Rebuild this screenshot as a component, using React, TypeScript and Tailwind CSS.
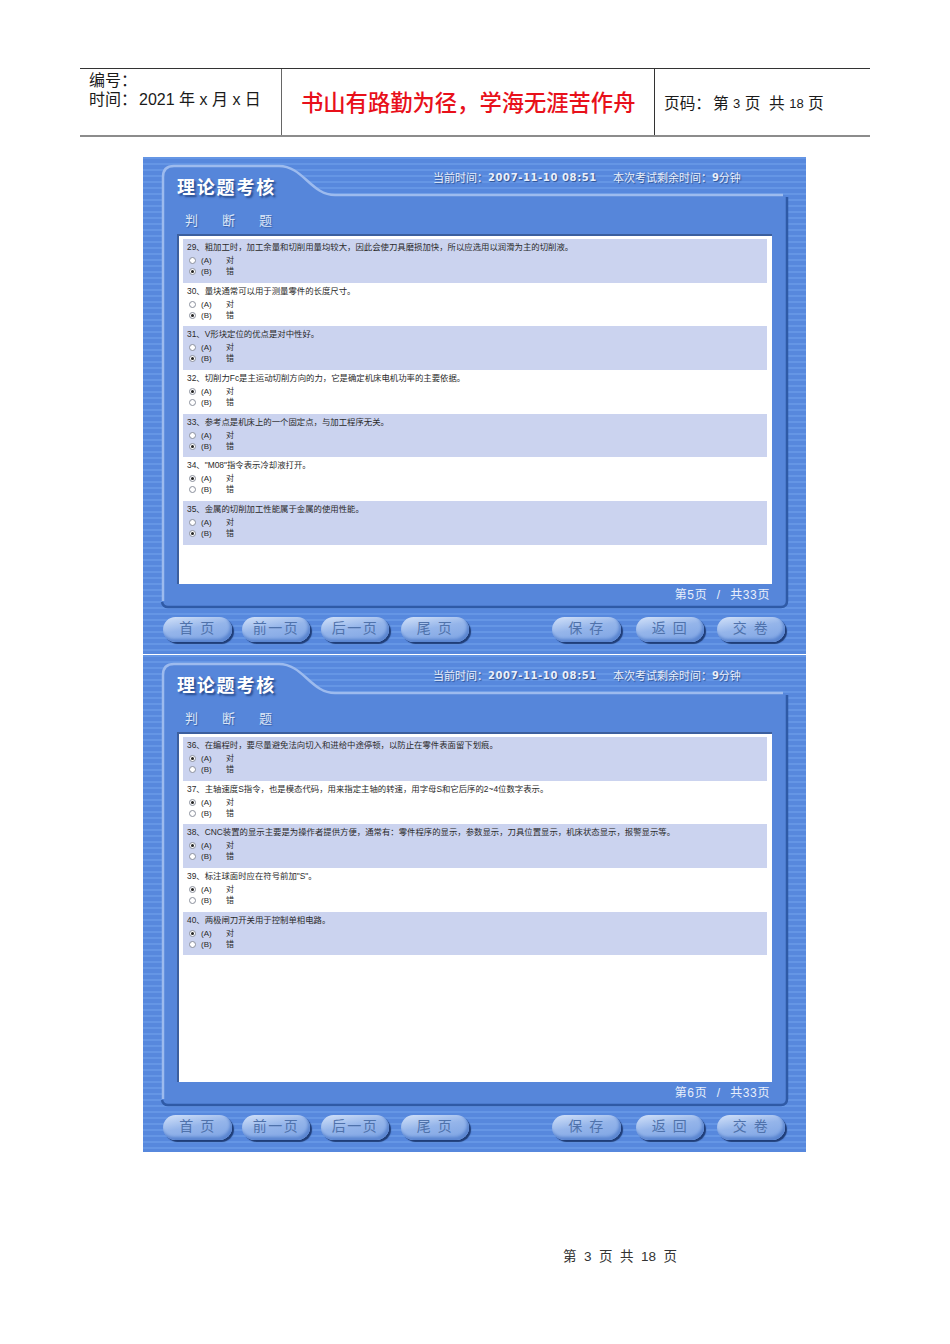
const cjk = "font-['Liberation_Sans','Noto_Sans_CJK_SC',sans-serif]";

type Question = { text: string; answer: "A" | "B" };

const pageOne: Question[] = [
  { text: "29、粗加工时，加工余量和切削用量均较大，因此会使刀具磨损加快，所以应选用以润滑为主的切削液。", answer: "B" },
  { text: "30、量块通常可以用于测量零件的长度尺寸。", answer: "B" },
  { text: "31、V形块定位的优点是对中性好。", answer: "B" },
  { text: "32、切削力Fc是主运动切削方向的力，它是确定机床电机功率的主要依据。", answer: "A" },
  { text: "33、参考点是机床上的一个固定点，与加工程序无关。", answer: "B" },
  { text: "34、\"M08\"指令表示冷却液打开。", answer: "A" },
  { text: "35、金属的切削加工性能属于金属的使用性能。", answer: "B" },
];

const pageTwo: Question[] = [
  { text: "36、在编程时，要尽量避免法向切入和进给中途停顿，以防止在零件表面留下划痕。", answer: "A" },
  { text: "37、主轴速度S指令，也是模态代码，用来指定主轴的转速，用字母S和它后序的2~4位数字表示。", answer: "A" },
  { text: "38、CNC装置的显示主要是为操作者提供方便，通常有：零件程序的显示，参数显示，刀具位置显示，机床状态显示，报警显示等。", answer: "A" },
  { text: "39、标注球面时应在符号前加\"S\"。", answer: "A" },
  { text: "40、两极闸刀开关用于控制单相电路。", answer: "A" },
];

const buttons = [
  { label: "首 页", cls: "ml-[20px] w-[69px]" },
  { label: "前一页", cls: "ml-[10px] w-[68px]" },
  { label: "后一页", cls: "ml-[11px] w-[68px]" },
  { label: "尾 页", cls: "ml-[12px] w-[68px]" },
  { label: "保 存", cls: "ml-[83px] w-[69px]" },
  { label: "返 回", cls: "ml-[15px] w-[68px]" },
  { label: "交 卷", cls: "ml-[13px] w-[68px]" },
];

function Radio({ checked }: { checked: boolean }) {
  return (
    <span className="flex h-[7px] w-[7px] items-center justify-center rounded-full border border-[#8a8f9c] bg-white">
      {checked && <span className="h-[3px] w-[3px] rounded-full bg-[#222]" />}
    </span>
  );
}

function Option({ letter, label, checked }: { letter: string; label: string; checked: boolean }) {
  return (
    <div className="flex h-[11px] items-center pl-[6px] text-[8px] leading-[11px]">
      <Radio checked={checked} />
      <span className="ml-[5px] w-[25px]">({letter})</span>
      <span>{label}</span>
    </div>
  );
}

function Row({ q, shaded }: { q: Question; shaded: boolean }) {
  return (
    <div className={`h-[43.67px] pt-[2px] text-[#2a2a2a] ${shaded ? "bg-[#cbd3ef]" : "bg-white"}`}>
      <div className="h-[12px] whitespace-nowrap pl-[4px] text-[8.4px] leading-[12px]">{q.text}</div>
      <div className="mt-[2px]">
        <Option letter="A" label="对" checked={q.answer === "A"} />
        <Option letter="B" label="错" checked={q.answer === "B"} />
      </div>
    </div>
  );
}

function Frame() {
  return (
    <svg className="absolute inset-0" width="663" height="497" viewBox="0 0 663 497">
      <path
        d="M19 20 Q19 8 31 8 L136 8 C160 8 168 38 192 38 L640 38 Q644 38 644 42 L644 444 Q644 450 638 450 L25 450 Q19 450 19 444 Z"
        fill="#5686da"
      />
      <path d="M20 444 L20 20 Q20 9 31 9 L136 9 C160 9 168 38 192 38 L640 38" fill="none" stroke="#9dbbee" strokeWidth="2.5" />
      <path d="M644 40 L644 444 Q644 450 638 450 L25 450 Q20 450 19 445" fill="none" stroke="#2f5aa6" strokeWidth="2.5" />
    </svg>
  );
}

function ExamPanel({ questions, page }: { questions: Question[]; page: number }) {
  return (
    <div className="relative h-[497px] w-[663px] bg-[repeating-linear-gradient(180deg,#6596e5_0,#6596e5_2px,#5788dd_2px,#5788dd_6px)]">
      <Frame />
      <div className="relative flex h-full flex-col">
        <div className="flex h-[77px] pl-[34px]">
          <div className="w-[256px]">
            <div className="mt-[21px] h-[20px] text-[18px] font-bold leading-[20px] tracking-[1.8px] text-white [text-shadow:2px_2px_2px_#274a8c]">
              理论题考核
            </div>
            <div className="ml-[8px] mt-[16px] h-[14px] text-[13px] leading-[14px] tracking-[24px] text-[#dbe6f8] [text-shadow:1px_1px_1px_#3a62ab]">
              判断题
            </div>
          </div>
          <div className="mt-[15px] flex h-[12px] items-center whitespace-nowrap text-[11px] leading-[12px] text-[#eaf0fb] [text-shadow:1px_1px_1px_#2c4f91]">
            当前时间：
            <span className="font-['DejaVu_Sans'] text-[10px] font-bold tracking-[0.6px]">2007-11-10 08:51</span>
            <span className="ml-[16px]">本次考试剩余时间：</span>
            <span className="font-['DejaVu_Sans'] text-[10px] font-bold">9</span>
            <span>分钟</span>
          </div>
        </div>
        <div className="mx-[34px] h-[350px] border-l-2 border-t-2 border-[#3c5f9e] bg-white pl-[4px] pr-[5px] pt-[3px]">
          {questions.map((q, i) => (
            <Row key={q.text} q={q} shaded={i % 2 === 0} />
          ))}
        </div>
        <div className="mt-[3px] flex h-[16px] justify-end whitespace-nowrap pr-[36px] text-[12px] leading-[16px] tracking-[0.6px] text-[#e8effb]">
          <span>第{page}页</span>
          <span className="w-[23px] text-center">/</span>
          <span>共33页</span>
        </div>
        <div className="mt-[14px] flex">
          {buttons.map((b) => (
            <div
              key={b.label}
              className={`flex h-[25px] items-center justify-center rounded-full bg-[linear-gradient(170deg,#d3e2f9_0%,#95b5ea_45%,#7ba2e3_100%)] pb-[2px] text-[14px] tracking-[1.5px] text-[#4f72ab] shadow-[inset_-2px_-3px_3px_#5a85d0,2px_2px_1px_#1f3d78] ${b.cls}`}
            >
              {b.label}
            </div>
          ))}
        </div>
      </div>
    </div>
  );
}

export default function App() {
  return (
    <div className={`flex h-[1344px] w-[950px] flex-col bg-white pt-[68px] text-[#1a1a1a] ${cjk}`}>
      {/* document header table */}
      <div className="ml-[80px] flex h-[69px] w-[790px] border-b-2 border-t border-b-[#8c8c8c] border-t-[#333]">
        <div className="w-[202px] border-r border-r-[#666] pl-[9px] pt-[2px] text-[16px] leading-[19px]">
          <div>编号：</div>
          <div>
            时间：<span className="ml-[2px]">2021 年 x 月 x 日</span>
          </div>
        </div>
        <div className="flex w-[373px] items-center border-r border-r-[#333] pl-[19px] pt-[4px] text-[22.3px] font-medium text-[#e8101a]">
          书山有路勤为径，学海无涯苦作舟
        </div>
        <div className="flex items-center whitespace-nowrap pl-[9px] pt-[3px] text-[15.7px]">
          页码：<span className="ml-[2px]">第</span>&nbsp;<span className="text-[13px]">3</span>&nbsp;页&nbsp;&nbsp;共&nbsp;<span className="text-[13px]">18</span>&nbsp;页
        </div>
      </div>

      <div className="ml-[143px] mt-[20px] flex flex-col gap-[1px]">
        <ExamPanel questions={pageOne} page={5} />
        <ExamPanel questions={pageTwo} page={6} />
      </div>

      <div className="ml-[563px] mt-[96px] flex h-[18px] w-[114px] items-center justify-between whitespace-nowrap text-[13.5px] leading-[18px] text-[#333]">
        <span>第</span>
        <span>3</span>
        <span>页</span>
        <span>共</span>
        <span>18</span>
        <span>页</span>
      </div>
    </div>
  );
}
